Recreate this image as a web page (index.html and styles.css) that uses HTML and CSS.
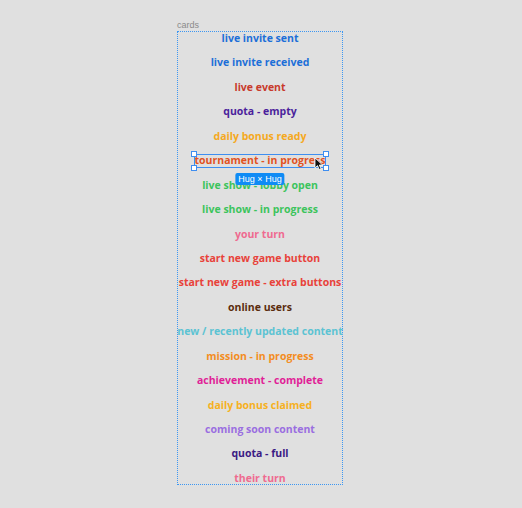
FILE: index.html
```html
<!DOCTYPE html>
<html>
<head>
<meta charset="utf-8">
<link rel="stylesheet" href="styles.css">
</head>
<body>
<div class="canvas">
  <div class="label">cards</div>
  <div class="frame">
    <div class="item c-blue">live invite sent</div>
    <div class="item c-blue">live invite received</div>
    <div class="item c-red">live event</div>
    <div class="item c-purple">quota - empty</div>
    <div class="item c-yellow">daily bonus ready</div>
    <div class="item c-tour"><span class="sel">tournament - in progress<span class="box"><i class="h tl"></i><i class="h tr"></i><i class="h bl"></i><i class="h br"></i></span><span class="tip">Hug × Hug</span><svg class="cursor" width="10" height="14" viewBox="0 0 10 14"><path d="M1 1 L1 11 L3.5 8.6 L5.3 12.6 L7 11.8 L5.3 8 L8.6 8 Z" fill="#111" stroke="#fff" stroke-width="0.8"/></svg></span></div>
    <div class="item c-green">live show - lobby open</div>
    <div class="item c-green">live show - in progress</div>
    <div class="item c-pink">your turn</div>
    <div class="item c-coral">start new game button</div>
    <div class="item c-coral">start new game - extra buttons</div>
    <div class="item c-brown">online users</div>
    <div class="item c-cyan">new / recently updated content</div>
    <div class="item c-orange">mission - in progress</div>
    <div class="item c-magenta">achievement - complete</div>
    <div class="item c-gold">daily bonus claimed</div>
    <div class="item c-lav">coming soon content</div>
    <div class="item c-dpurple">quota - full</div>
    <div class="item c-pink">their turn</div>
  </div>
</div>
</body>
</html>
```
FILE: styles.css
```css
html, body {
  margin: 0;
  padding: 0;
  background: #e0e0e0;
}
.canvas {
  padding: 20px 0 0 177px;
}
.label {
  font-family: "Liberation Sans", Arial, sans-serif;
  font-size: 9px;
  line-height: 11px;
  color: #8a8a8a;
  height: 11px;
}
.frame {
  width: 164px;
  border: 1px dotted #3d97f2;
  display: flex;
  flex-direction: column;
  align-items: center;
  gap: 12.44px;
}
.item {
  font-family: "Open Sans", Lato, sans-serif;
  font-weight: 700;
  font-size: 10.5px;
  line-height: 12px;
  white-space: nowrap;
  text-align: center;
}
.sel {
  position: relative;
  display: inline-block;
}
.box {
  position: absolute;
  left: -1px;
  right: -1px;
  top: 0;
  bottom: -2px;
  border: 1px solid #3f8ef0;
}
.h {
  position: absolute;
  width: 4px;
  height: 4px;
  background: #fff;
  border: 1px solid #3f8ef0;
}
.tl { left: -4px; top: -4px; }
.tr { right: -4px; top: -4px; }
.bl { left: -4px; bottom: -4px; }
.br { right: -4px; bottom: -4px; }
.tip {
  position: absolute;
  left: 50%;
  top: 19px;
  transform: translateX(-50%);
  background: #0f8bf5;
  color: #fff;
  font-family: "Liberation Sans", Arial, sans-serif;
  font-weight: 400;
  font-size: 9px;
  line-height: 12px;
  padding: 0 3px;
  border-radius: 2px;
}
.cursor {
  position: absolute;
  right: 1px;
  top: 3px;
}
.c-blue { color: #1c6fd8; }
.c-red { color: #c83a2c; }
.c-purple { color: #4b1f9c; }
.c-yellow { color: #f5a91e; }
.c-tour { color: #e2521f; }
.c-green { color: #3cc45c; }
.c-pink { color: #ef6b90; }
.c-coral { color: #e8423a; }
.c-brown { color: #5a2c0e; }
.c-cyan { color: #5cc3d3; }
.c-orange { color: #f38d1f; }
.c-magenta { color: #e01f97; }
.c-gold { color: #f6b11f; }
.c-lav { color: #9a6ee0; }
.c-dpurple { color: #3b1a84; }
```
